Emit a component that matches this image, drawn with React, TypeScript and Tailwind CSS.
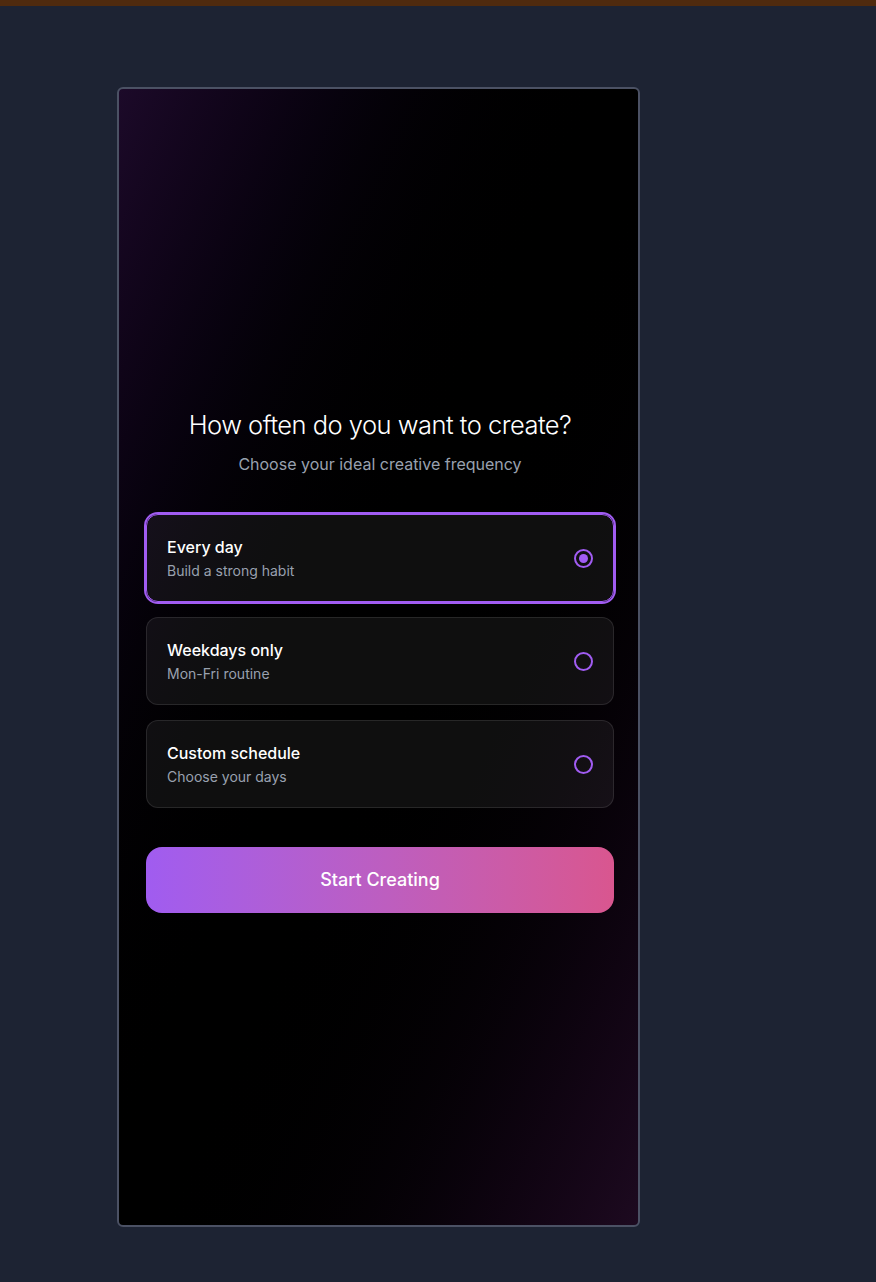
import React, { useState } from "react";

const options = [
  { title: "Every day", sub: "Build a strong habit" },
  { title: "Weekdays only", sub: "Mon-Fri routine" },
  { title: "Custom schedule", sub: "Choose your days" },
];

export default function App() {
  const [sel, setSel] = useState(0);
  return (
    <div className="min-h-[1282px] bg-[#1d2333]" style={{ fontFamily: "Inter, 'Noto Sans', sans-serif" }}>
      <div className="h-[6px] bg-[#4f2a0e]" />
      <div className="pl-[117px] pt-[81px]">
        <div className="w-[523px] h-[1140px] rounded-md border-2 border-[#4b5164] bg-linear-to-br from-[#1c0a29] via-black to-[#1d0a20] flex flex-col pl-[27px] pr-[24px] pt-[320px]">
          <h1 className="text-center text-[25.5px] font-light text-white tracking-[-0.02em] leading-8">
            How often do you want to create?
          </h1>
          <p className="mt-[11px] text-center text-base text-gray-400 leading-6">
            Choose your ideal creative frequency
          </p>
          <div className="mt-[38px] flex flex-col gap-[15px]">
            {options.map((o, i) => {
              const active = i === sel;
              return (
                <button
                  key={o.title}
                  onClick={() => setSel(i)}
                  className={
                    "h-[88px] w-full rounded-xl border px-5 flex items-center justify-between text-left bg-[#ffffff0f] " +
                    (active ? "border-[#a15cf2] ring-2 ring-[#a15cf2]" : "border-white/10")
                  }
                >
                  <div>
                    <div className="text-base font-medium text-white leading-6">{o.title}</div>
                    <div className="mt-[2px] text-sm text-gray-400 leading-5">{o.sub}</div>
                  </div>
                  <div className="w-[19px] h-[19px] rounded-full border-2 border-[#a15cf2] flex items-center justify-center">
                    {active && <div className="w-[9px] h-[9px] rounded-full bg-[#a15cf2]" />}
                  </div>
                </button>
              );
            })}
          </div>
          <button className="mt-[39px] h-[66px] w-full rounded-2xl bg-linear-to-r from-[#a05cf0] to-[#d9568f] text-white text-lg font-medium">
            Start Creating
          </button>
        </div>
      </div>
    </div>
  );
}
